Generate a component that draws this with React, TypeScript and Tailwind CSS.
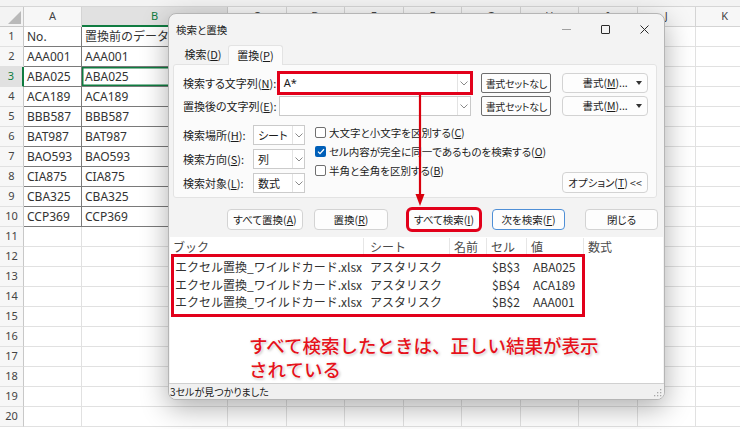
import React from 'react';
import clsx from 'clsx';

const DATA: [string, string][] = [
  ['No.', '置換前のデータ'],
  ['AAA001', 'AAA001'],
  ['ABA025', 'ABA025'],
  ['ACA189', 'ACA189'],
  ['BBB587', 'BBB587'],
  ['BAT987', 'BAT987'],
  ['BAO593', 'BAO593'],
  ['CIA875', 'CIA875'],
  ['CBA325', 'CBA325'],
  ['CCP369', 'CCP369'],
];

const COLS = ['A', 'B', 'C', 'D', 'E', 'F', 'G', 'H', 'I', 'J', 'K'];
const COL_W = [
  'w-[58px]',
  'w-[146px]',
  'w-[58.5px]',
  'w-[58.5px]',
  'w-[58.5px]',
  'w-[58.5px]',
  'w-[58.5px]',
  'w-[58.5px]',
  'w-[58.5px]',
  'w-[58.5px]',
  'w-[58.5px]',
];

const RESULTS = [
  ['$B$3', 'ABA025'],
  ['$B$4', 'ACA189'],
  ['$B$2', 'AAA001'],
];

const Chevron = () => (
  <svg width="8" height="5" viewBox="0 0 8 5">
    <path d="M0.5 0.5 L4 4 L7.5 0.5" fill="none" stroke="#8a8a8a" strokeWidth="1" />
  </svg>
);

const Sheet: React.FC = () => (
  <div className="flex flex-col">
    <div className="h-[7px] shrink-0 border-b border-[#d6d6d6] bg-[#f3f3f3]" />
    <div className="flex h-[20px] shrink-0">
      <div className="flex w-[24px] shrink-0 items-end justify-end border-r border-b border-[#c8c8c8] bg-[#f3f3f3] p-[2px]">
        <svg width="13" height="13" viewBox="0 0 13 13">
          <polygon points="13,0 13,13 0,13" fill="#b9b9b9" />
        </svg>
      </div>
      {COLS.map((c, i) => (
        <div
          key={c}
          className={clsx(
            COL_W[i],
            'flex shrink-0 items-center justify-center border-r text-[11px]',
            c === 'B'
              ? 'border-b-2 border-r-[#c8c8c8] border-b-[#107c41] bg-[#e1e1e1] text-[#107c41]'
              : 'border-b border-[#d4d4d4] bg-[#f7f7f7] text-[#444]'
          )}
        >
          {c}
        </div>
      ))}
    </div>
    {Array.from({ length: 20 }, (_, r) => {
      const row = DATA[r];
      const n = r + 1;
      return (
        <div key={n} className="flex h-[20px] shrink-0">
          <div
            className={clsx(
              'flex w-[24px] shrink-0 items-center justify-center border-b border-[#e1e1e1] text-[11px]',
              n === 3
                ? 'border-r-2 border-r-[#107c41] bg-[#e1e1e1] text-[#107c41]'
                : 'border-r border-r-[#c8c8c8] bg-[#f7f7f7] text-[#444]'
            )}
          >
            {n}
          </div>
          {COLS.map((c, i) => {
            const inTable = row && i < 2;
            return (
              <div
                key={c}
                className={clsx(
                  COL_W[i],
                  'flex shrink-0 items-center overflow-hidden whitespace-nowrap border-r border-b pl-[3px] text-[12px] text-[#333]',
                  inTable ? 'border-[#7a7a7a]' : 'border-[#e1e1e1]',
                  n === 3 && c === 'B' && 'shadow-[inset_0_0_0_1.5px_#107c41]'
                )}
              >
                {inTable ? row[i] : ''}
              </div>
            );
          })}
        </div>
      );
    })}
  </div>
);

const Btn: React.FC<{ className?: string; children: React.ReactNode }> = ({ className, children }) => (
  <div
    className={clsx(
      'flex h-[21px] items-center justify-center rounded-[4px] border bg-[#fdfdfd] text-[10.5px] whitespace-nowrap',
      className
    )}
  >
    {children}
  </div>
);

const Check: React.FC<{ checked?: boolean; children: React.ReactNode }> = ({ checked, children }) => (
  <div className="flex h-[19px] items-center gap-[3px] whitespace-nowrap">
    {checked ? (
      <div className="flex h-[11px] w-[11px] items-center justify-center rounded-[2px] bg-[#005fb8]">
        <svg width="8" height="7" viewBox="0 0 8 7">
          <path d="M1 3.6 L3 5.6 L7 1.2" fill="none" stroke="#fff" strokeWidth="1.3" />
        </svg>
      </div>
    ) : (
      <div className="h-[11px] w-[11px] rounded-[2px] border border-[#6f6f6f] bg-white" />
    )}
    <span className="text-[10.5px]">{children}</span>
  </div>
);

const Select: React.FC<{ label: React.ReactNode; value: string }> = ({ label, value }) => (
  <div className="flex h-[20px] items-center">
    <span className="w-[70px] text-[11px]">{label}</span>
    <div className="flex h-[20px] w-[52px] border border-[#cbcbcb] bg-white">
      <span className="flex flex-1 items-center pl-[4px] text-[11px]">{value}</span>
      <div className="flex w-[12px] items-center justify-center border-l border-[#e3e3e3]">
        <Chevron />
      </div>
    </div>
  </div>
);

const FormatButtons = () => (
  <>
    <div className="ml-[10px] flex h-[20px] w-[70px] items-center justify-center rounded-[2px] border-[1.5px] border-[#6e6e6e] bg-[#fdfdfd] text-[10px] tracking-[-0.3px] whitespace-nowrap">
      書式セットなし
    </div>
    <div className="relative ml-[11px] flex h-[20px] w-[86px] items-center justify-center rounded-[4px] border border-[#d3d3d3] bg-[#fdfdfd] text-[10.5px]">
      書式(<u>M</u>)...
      <svg className="absolute right-[5px]" width="6" height="4" viewBox="0 0 6 4">
        <polygon points="0,0 6,0 3,4" fill="#333" />
      </svg>
    </div>
  </>
);

const Dialog: React.FC = () => (
  <div className="absolute top-[13px] left-[168px] flex w-[497px] flex-col overflow-hidden rounded-[8px] border border-[#b5b5b5] bg-[#f3f3f3] font-['Noto_Sans_CJK_JP',sans-serif] text-[#1b1b1b] shadow-[0_8px_28px_rgba(0,0,0,0.32)] [font-feature-settings:'palt']">
    {/* title bar */}
    <div className="flex h-[31px] items-center">
      <span className="pl-[7px] text-[10.5px]">検索と置換</span>
      <div className="ml-auto flex h-full">
        <div className="flex w-[39px] items-center justify-center">
          <span className="h-px w-[9px] bg-[#a0a0a0]" />
        </div>
        <div className="flex w-[39px] items-center justify-center">
          <span className="h-[9px] w-[9px] rounded-[1px] border border-[#2a2a2a]" />
        </div>
        <div className="flex w-[39px] items-center justify-center">
          <svg width="9" height="9" viewBox="0 0 9 9">
            <path d="M0.5 0.5 L8.5 8.5 M8.5 0.5 L0.5 8.5" stroke="#2a2a2a" strokeWidth="1" />
          </svg>
        </div>
      </div>
    </div>

    {/* tabs */}
    <div className="flex h-[19px] pl-[9px]">
      <div className="flex w-[50px] items-center justify-center text-[11px]">
        検索(<u>D</u>)
      </div>
      <div className="relative z-10 -mb-px flex w-[55px] items-center justify-center rounded-t-[3px] border border-b-0 border-[#e3e3e3] bg-[#fbfbfb] text-[11px]">
        置換(<u>P</u>)
      </div>
    </div>

    {/* panel */}
    <div className="ml-[4px] flex h-[134px] w-[484px] flex-col rounded-[3px] border border-[#e3e3e3] bg-[#fbfbfb] pr-[8px] pl-[9px]">
      <div className="mt-[8px] flex h-[20px] items-center">
        <span className="w-[96px] text-[11px]">
          検索する文字列(<u>N</u>):
        </span>
        <div className="flex h-[20px] w-[193px] border border-[#c9c9c9] bg-white outline-3 outline-offset-[-1px] outline-[#e2001a]">
          <span className="flex flex-1 items-center pl-[4px] font-['Noto_Sans',sans-serif] text-[11px]">A*</span>
          <div className="flex w-[13px] items-center justify-center border-l border-[#e3e3e3]">
            <Chevron />
          </div>
        </div>
        <FormatButtons />
      </div>

      <div className="mt-[3px] flex h-[20px] items-center">
        <span className="w-[96px] text-[11px]">
          置換後の文字列(<u>E</u>):
        </span>
        <div className="flex h-[20px] w-[193px] border border-[#c9c9c9] bg-white">
          <span className="flex-1" />
          <div className="flex w-[13px] items-center justify-center border-l border-[#e3e3e3]">
            <Chevron />
          </div>
        </div>
        <FormatButtons />
      </div>

      <div className="mt-[9px] flex">
        <div className="flex flex-col gap-[4px]">
          <Select label={<>検索場所(<u>H</u>):</>} value="シート" />
          <Select label={<>検索方向(<u>S</u>):</>} value="列" />
          <Select label={<>検索対象(<u>L</u>):</>} value="数式" />
        </div>
        <div className="-mt-[2px] ml-[10px] flex flex-col">
          <Check>
            大文字と小文字を区別する(<u>C</u>)
          </Check>
          <Check checked>
            セル内容が完全に同一であるものを検索する(<u>O</u>)
          </Check>
          <Check>
            半角と全角を区別する(<u>B</u>)
          </Check>
        </div>
        <div className="flex flex-1 items-end justify-end">
          <Btn className="w-[86px] border-[#d3d3d3]">
            オプション(<u>T</u>) &lt;&lt;
          </Btn>
        </div>
      </div>
    </div>

    {/* action buttons */}
    <div className="mt-[11px] flex h-[21px] pl-[58px]">
      <Btn className="w-[76px] border-[#d3d3d3]">
        すべて置換(<u>A</u>)
      </Btn>
      <Btn className="ml-[11px] w-[74px] border-[#d3d3d3]">
        置換(<u>R</u>)
      </Btn>
      <Btn className="ml-[20px] w-[72px] rounded-[2px] border-[#d3d3d3] outline-3 outline-offset-[-1px] outline-[#e2001a]">
        すべて検索(<u>I</u>)
      </Btn>
      <Btn className="ml-[12px] w-[73px] border-[#4f8fd6]">
        次を検索(<u>F</u>)
      </Btn>
      <Btn className="ml-[20px] w-[73px] border-[#d3d3d3]">閉じる</Btn>
    </div>

    {/* results list */}
    <div className="mt-[7px] ml-px flex h-[146px] w-[493px] flex-col bg-white [font-feature-settings:normal]">
      <div className="flex h-[17px] items-center pt-[2px] text-[12px] text-[#4a4a4a]">
        <span className="w-[194px] border-r border-[#e6e6e6] pl-[3px]">ブック</span>
        <span className="w-[86px] border-r border-[#e6e6e6] pl-[6px]">シート</span>
        <span className="w-[37px] border-r border-[#e6e6e6] pl-[4px]">名前</span>
        <span className="w-[40px] border-r border-[#e6e6e6] pl-[4px]">セル</span>
        <span className="w-[57px] border-r border-[#e6e6e6] pl-[4px]">値</span>
        <span className="pl-[4px]">数式</span>
      </div>
      <div className="ml-px h-[63px] w-[414px] border-[3px] border-[#e2001a] pt-[1.5px]">
        {RESULTS.map(([cell, val]) => (
          <div key={cell} className="flex h-[17.5px] items-center whitespace-nowrap text-[12px] text-[#333]">
            <span className="w-[190px] pl-[1px]">エクセル置換_ワイルドカード.xlsx</span>
            <span className="w-[86px] pl-[6px]">アスタリスク</span>
            <span className="w-[37px]" />
            <span className="w-[40px] pl-[5px]">{cell}</span>
            <span className="pl-[6px]">{val}</span>
          </div>
        ))}
      </div>
      <div className="mt-[16px] ml-[79px] text-[18.5px] leading-[24px] font-medium whitespace-nowrap text-[#e5121b] [text-shadow:0_0_2px_#fff,0_0_3px_#fff,1px_1px_3px_rgba(0,0,0,0.35)]">
        すべて検索したときは、正しい結果が表示
        <br />
        されている
      </div>
    </div>

    {/* status bar */}
    <div className="relative flex h-[16px] items-center border-t border-[#d0d0d0] bg-[#f0f0f0] pl-[1px] text-[10px]">
      3セルが見つかりました
      <svg className="absolute right-[2px] bottom-[2px]" width="8" height="8" viewBox="0 0 8 8">
        <g fill="#a8a8a8">
          <rect x="6" y="0" width="1.3" height="1.3" />
          <rect x="3" y="3" width="1.3" height="1.3" />
          <rect x="6" y="3" width="1.3" height="1.3" />
          <rect x="0" y="6" width="1.3" height="1.3" />
          <rect x="3" y="6" width="1.3" height="1.3" />
          <rect x="6" y="6" width="1.3" height="1.3" />
        </g>
      </svg>
    </div>

    {/* red arrow overlay */}
    <svg className="absolute top-[81px] left-[246px]" width="10" height="112" viewBox="0 0 10 112">
      <line x1="5" y1="0" x2="5" y2="101" stroke="#d9000d" strokeWidth="2.2" />
      <polygon points="0.5,99 9.5,99 5,111" fill="#d9000d" />
    </svg>
  </div>
);

export default function App() {
  return (
    <div className="relative h-[429px] w-[740px] overflow-hidden bg-white font-['Noto_Sans','Noto_Sans_CJK_JP',sans-serif]">
      <Sheet />
      <Dialog />
    </div>
  );
}
